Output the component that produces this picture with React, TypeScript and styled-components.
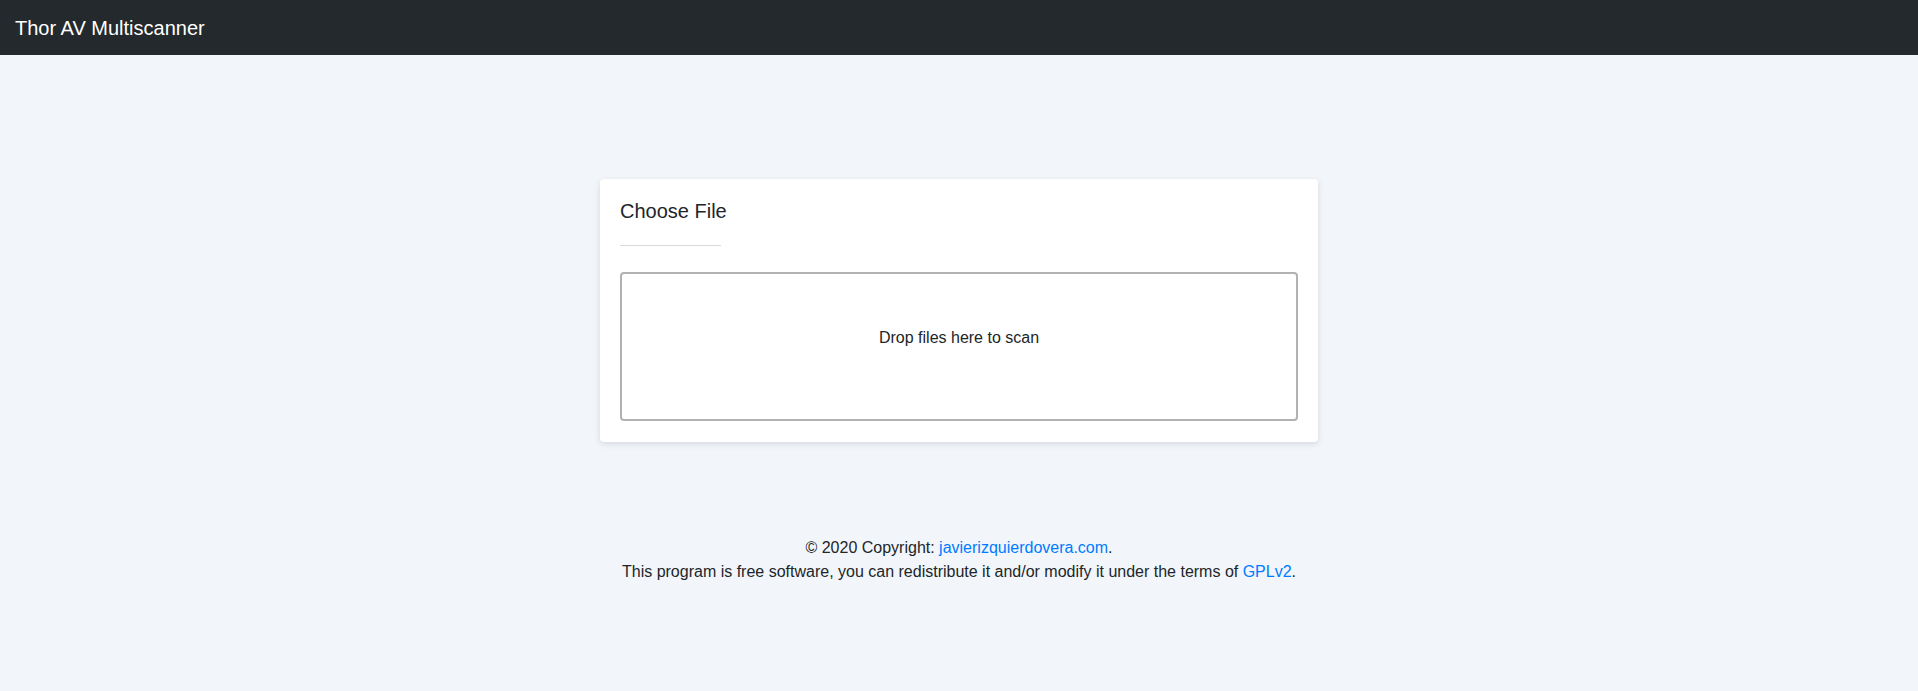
import { createGlobalStyle } from 'styled-components';
import styled from 'styled-components';

const GlobalStyle = createGlobalStyle`
  html, body {
    margin: 0;
    padding: 0;
  }

  body {
    background: #f2f6fa;
    color: #212529;
    font-family: 'Liberation Sans', Arial, sans-serif;
    font-size: 16px;
    line-height: 1.5;
  }

  * {
    box-sizing: border-box;
  }
`;

const Navbar = styled.nav`
  height: 55px;
  background: #24292d;
  display: flex;
  align-items: center;
  padding: 0 15px;
`;

const Brand = styled.a`
  color: #fff;
  font-size: 20px;
  line-height: 30px;
  text-decoration: none;
`;

const Main = styled.main`
  display: flex;
  flex-direction: column;
  align-items: center;
  padding-top: 124px;
`;

const Card = styled.section`
  width: 718px;
  background: #fff;
  border-radius: 4px;
  box-shadow: 0 2px 6px rgba(0, 0, 0, 0.12);
  padding: 20px 20px 21px;
`;

const Title = styled.h5`
  margin: 0;
  font-size: 20px;
  font-weight: 400;
  line-height: 24px;
`;

const Divider = styled.hr`
  width: 101px;
  margin: 22px 0 26px;
  border: 0;
  border-top: 1px solid #d9d9d9;
`;

const DropZone = styled.form`
  min-height: 149px;
  border: 2px solid rgba(0, 0, 0, 0.3);
  border-radius: 4px;
  background: #fff;
  padding: 20px;
  cursor: pointer;
`;

const DropMessage = styled.div`
  text-align: center;
  margin: 32px 0;
  line-height: 24px;
`;

const Footer = styled.footer`
  margin-top: 94px;
  text-align: center;
  line-height: 24px;
`;

const FooterLine = styled.div``;

const Link = styled.a`
  color: #007bff;
  text-decoration: none;
`;

const App = () => {
  return (
    <>
      <GlobalStyle />
      <Navbar>
        <Brand href="#">Thor AV Multiscanner</Brand>
      </Navbar>
      <Main>
        <Card>
          <Title>Choose File</Title>
          <Divider />
          <DropZone>
            <DropMessage>Drop files here to scan</DropMessage>
          </DropZone>
        </Card>
        <Footer>
          <FooterLine>
            © 2020 Copyright: <Link href="#">javierizquierdovera.com</Link>.
          </FooterLine>
          <FooterLine>
            This program is free software, you can redistribute it and/or modify it under the terms of{' '}
            <Link href="#">GPLv2</Link>.
          </FooterLine>
        </Footer>
      </Main>
    </>
  );
};

export default App;
